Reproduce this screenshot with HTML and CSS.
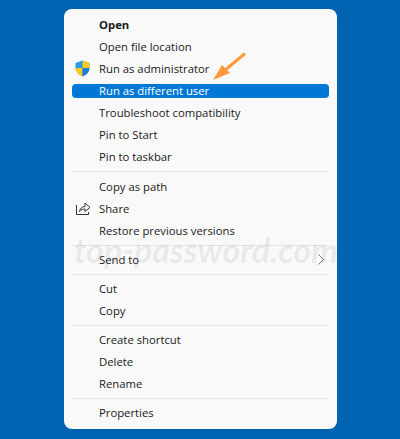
FILE: index.html
```html
<!DOCTYPE html>
<html lang="en">
<head>
<meta charset="utf-8">
<title>Context menu</title>
<link rel="stylesheet" href="styles.css">
</head>
<body>
<div class="menu">
  <div class="row bold"><span class="ico"></span>Open</div>
  <div class="row"><span class="ico"></span>Open file location</div>
  <div class="row"><span class="ico"><svg width="15" height="17" viewBox="0 0 15 17"><path d="M7.5 0.5 L14.5 3 V8 C14.5 12 11 15 7.5 16.5 C4 15 0.5 12 0.5 8 V3 Z" fill="#2d9be8"/><path d="M7.5 0.5 L14.5 3 V8 H7.5 Z" fill="#ffc81e"/><path d="M7.5 8 H0.5 C0.5 12 4 15 7.5 16.5 Z" fill="#ffc81e"/><path d="M7.5 8 H14.5 C14.5 12 11 15 7.5 16.5 Z" fill="#1c7fd0"/></svg></span>Run as administrator</div>
  <div class="row selected"><span class="ico"></span>Run as different user</div>
  <div class="row"><span class="ico"></span>Troubleshoot compatibility</div>
  <div class="row"><span class="ico"></span>Pin to Start</div>
  <div class="row"><span class="ico"></span>Pin to taskbar</div>
  <div class="sep sep-wide"></div>
  <div class="row"><span class="ico"></span>Copy as path</div>
  <div class="row"><span class="ico"><svg width="16" height="15" viewBox="0 0 16 15" fill="none" stroke="#333" stroke-width="1"><path d="M1.5 4 V13.5 H13.5 V11"/><path d="M4.5 10.5 C5 7.5 7 5.5 10 5.5 V2 L15 6.5 L10 10.5 V8 C8 8 6 8.8 4.5 10.5 Z"/></svg></span>Share</div>
  <div class="row"><span class="ico"></span>Restore previous versions</div>
  <div class="sep"></div>
  <div class="row submenu"><span class="ico"></span>Send to<svg class="chev" width="6" height="11" viewBox="0 0 6 11" fill="none" stroke="#8a6a86" stroke-width="1"><path d="M0.5 0.5 L5.5 5.5 L0.5 10.5"/></svg></div>
  <div class="sep"></div>
  <div class="row"><span class="ico"></span>Cut</div>
  <div class="row"><span class="ico"></span>Copy</div>
  <div class="sep"></div>
  <div class="row"><span class="ico"></span>Create shortcut</div>
  <div class="row"><span class="ico"></span>Delete</div>
  <div class="row"><span class="ico"></span>Rename</div>
  <div class="sep"></div>
  <div class="row"><span class="ico"></span>Properties</div>
</div>
<div class="watermark">top-password.com</div>
<svg class="arrow" width="36" height="30" viewBox="0 0 36 30"><path d="M33 1.5 L12 19" stroke="#ff9a3c" stroke-width="3" fill="none"/><path d="M1 28 L10 13 L18 21 Z" fill="#ff9a3c"/></svg>
</body>
</html>
```
FILE: styles.css
```css
html, body {
  margin: 0;
  height: 100%;
}
body {
  position: relative;
  box-sizing: border-box;
  width: 400px;
  height: 439px;
  overflow: hidden;
  padding: 9px 63px 10px 64px;
  background: #0063b1;
  font-family: "Open Sans", "Noto Sans", sans-serif;
  font-size: 11.3px;
  color: #1a1a1a;
}
.menu {
  box-sizing: border-box;
  height: 420px;
  padding: 5px 0;
  background: #f9f9f9;
  border-radius: 8px;
}
.row {
  display: flex;
  align-items: center;
  box-sizing: border-box;
  height: 22px;
  padding-left: 11px;
  padding-bottom: 2px;
  white-space: nowrap;
}
.bold {
  font-weight: 700;
}
.ico {
  display: flex;
  align-items: center;
  justify-content: flex-start;
  width: 24px;
  height: 17px;
}
.selected {
  height: 14px;
  margin: 4px 8px;
  padding-left: 3px;
  padding-bottom: 2px;
  background: #0078d4;
  border-radius: 4px;
  color: #ffffff;
}
.submenu {
  padding-right: 13px;
}
.chev {
  margin-left: auto;
}
.sep {
  height: 1px;
  margin: 3px 8px;
  background: #e5e5e5;
}
.sep-wide {
  margin-bottom: 4px;
}
.watermark {
  position: absolute;
  left: 74px;
  top: 229px;
  font-family: "Lato", sans-serif;
  font-size: 34px;
  font-weight: 700;
  font-style: italic;
  color: rgba(0, 0, 0, 0.07);
  white-space: nowrap;
}
.arrow {
  position: absolute;
  left: 212px;
  top: 52px;
}
```
